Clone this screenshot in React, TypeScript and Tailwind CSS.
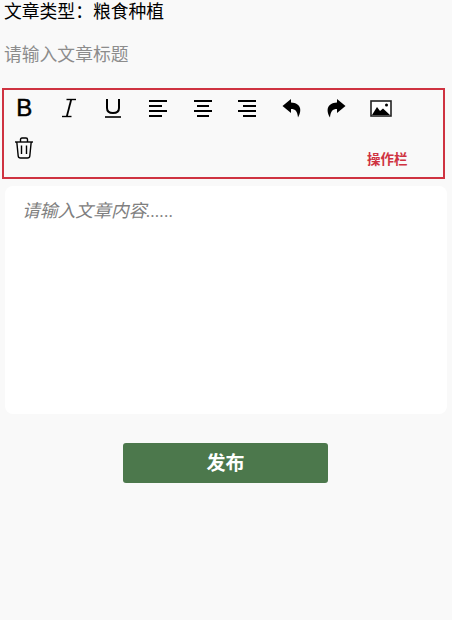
const FONT = "font-['Roboto','Noto_Sans_CJK_SC',sans-serif]";

function AlignIcon({ lines }: { lines: number[][] }) {
  return (
    <svg width="20" height="18" viewBox="0 0 20 18" fill="none" stroke="#000" strokeWidth="2">
      {lines.map(([x1, x2], i) => (
        <path key={i} d={`M${x1} ${2 + i * 5}H${x2}`} />
      ))}
    </svg>
  );
}

function ToolButton({ children }: { children: React.ReactNode }) {
  return <div className="flex h-[40px] w-[44.6px] items-center justify-center">{children}</div>;
}

export default function App() {
  return (
    <div className={`${FONT} h-[620px] w-[452px] bg-[#f9f9f9] text-black`}>
      <div className="h-[23px] pl-[4px] text-[17.8px] leading-[23px]">文章类型：粮食种植</div>

      <div className="mt-[20px] h-[23px] pl-[4px] text-[17.8px] leading-[23px] text-[#8c8c8c]">请输入文章标题</div>

      {/* toolbar */}
      <div className="relative mt-[22px] ml-[2px] h-[91px] w-[443px] border-2 border-[#cf3341]">
        <div className="-mt-[2px] -ml-[2px] flex flex-wrap">
          <ToolButton>
            <span className="font-['Liberation_Sans',sans-serif] text-[24px] leading-none [-webkit-text-stroke:0.5px_#000]">B</span>
          </ToolButton>
          <ToolButton>
            <svg width="16" height="20" viewBox="0 0 16 20" fill="none" stroke="#000">
              <path d="M5.5 1.5H15" strokeWidth="1.4" />
              <path d="M1 18.5H10.5" strokeWidth="1.4" />
              <path d="M10.2 1.5L5.8 18.5" strokeWidth="1.8" />
            </svg>
          </ToolButton>
          <ToolButton>
            <svg width="18" height="20" viewBox="0 0 18 20" fill="none" stroke="#000" strokeWidth="2">
              <path d="M3 1V10Q3 15 9 15Q15 15 15 10V1" />
              <path d="M1 19H17" strokeWidth="1.6" />
            </svg>
          </ToolButton>
          <ToolButton>
            <AlignIcon lines={[[1, 19], [1, 14], [1, 19], [1, 14]]} />
          </ToolButton>
          <ToolButton>
            <AlignIcon lines={[[1, 19], [4, 16], [1, 19], [4, 16]]} />
          </ToolButton>
          <ToolButton>
            <AlignIcon lines={[[1, 19], [6, 19], [1, 19], [6, 19]]} />
          </ToolButton>
          <ToolButton>
            <svg width="20" height="20" viewBox="0 0 20 20" fill="#000">
              <path d="M9 1L0.500 8L9 15V11C13.500 11 15.500 13.500 16 19.500C20 13 19.500 5 9 4.500Z" />
            </svg>
          </ToolButton>
          <ToolButton>
            <svg width="20" height="20" viewBox="0 0 20 20" fill="#000">
              <path d="M11 1L19.500 8L11 15V11C6.500 11 4.500 13.500 4 19.500C0 13 0.500 5 11 4.500Z" />
            </svg>
          </ToolButton>
          <ToolButton>
            <svg width="22" height="17" viewBox="0 0 22 17">
              <rect x="1" y="1" width="20" height="15" fill="#fff" stroke="#222" strokeWidth="1.6" />
              <path d="M2 15L7 7L10 11L13 8.5L20 15Z" fill="#000" />
              <circle cx="16.5" cy="5" r="1.5" fill="#000" />
            </svg>
          </ToolButton>
          <ToolButton>
            <svg width="20" height="22" viewBox="0 0 20 22" fill="none" stroke="#000" strokeWidth="1.4">
              <path d="M1 5H19" />
              <path d="M6.5 5V2.5Q6.5 1 8 1H12Q13.5 1 13.5 2.5V5" />
              <path d="M2.8 5L4.2 19Q4.4 21 6.5 21H13.5Q15.6 21 15.8 19L17.2 5" />
              <path d="M7.5 8.5V17M12.5 8.5V17" />
            </svg>
          </ToolButton>
        </div>
        <div className="absolute top-[61px] left-[363px] text-[13.5px] leading-[17px] font-bold text-[#cf3341]">操作栏</div>
      </div>

      {/* editor */}
      <div className="mt-[7px] ml-[5px] h-[228px] w-[442px] rounded-lg bg-white px-[17px] py-[13px] text-[17.8px] leading-[23px] text-[#808080] italic">
        请输入文章内容......
      </div>

      <div className="mt-[29px] ml-[123px] flex h-[40px] w-[205px] items-center justify-center rounded-[3px] bg-[#4c784c] pt-[2px] text-[19px] font-bold text-white">
        发布
      </div>
    </div>
  );
}
